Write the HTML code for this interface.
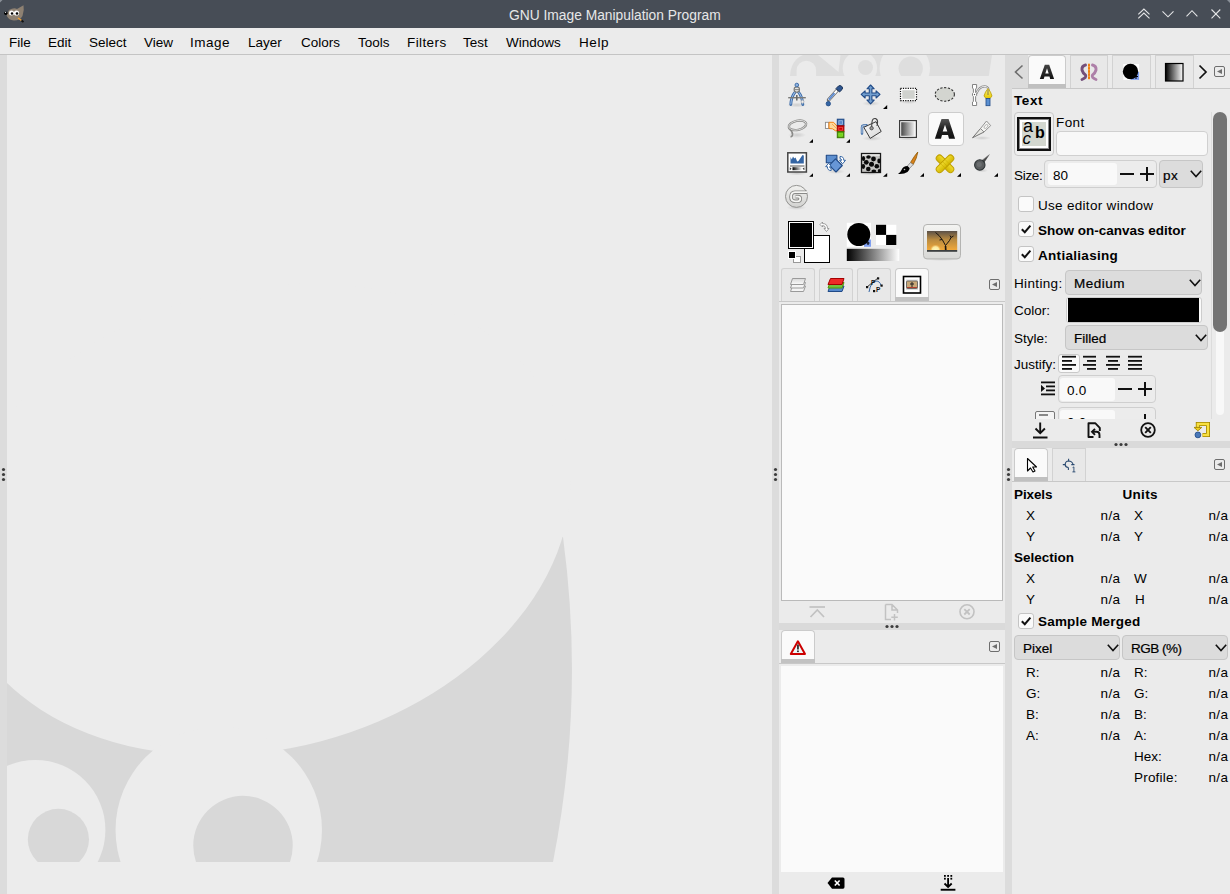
<!DOCTYPE html>
<html><head><meta charset="utf-8">
<style>
*{margin:0;padding:0;box-sizing:border-box}
html,body{width:1230px;height:894px;overflow:hidden;background:#ebebeb;font-family:"Liberation Sans",sans-serif}
.a{position:absolute}
.t{position:absolute;font-size:13.5px;line-height:1;white-space:pre;color:#000}
.b{font-weight:bold}
svg{position:absolute;overflow:visible}
</style></head><body>
<!-- title bar -->
<div class="a" style="left:0;top:0;width:1230px;height:28px;background:#474d56"></div>
<div class="t" style="left:509px;top:9px;font-size:13.8px;color:#e6e7e8">GNU Image Manipulation Program</div>
<!-- title icons -->
<svg style="left:0;top:0" width="1230" height="28" viewBox="0 0 1230 28">
<path d="M1138.3 14.3 L1143.9 9 L1149.5 14.3 M1138.3 18.4 L1143.9 13.1 L1149.5 18.4" fill="none" stroke="#e4e5e6" stroke-width="1.1"/>
<path d="M1162.5 11.3 L1168 16.8 L1173.5 11.3" fill="none" stroke="#e4e5e6" stroke-width="1.1"/>
<path d="M1186.5 16.3 L1192 10.7 L1197.4 16.3" fill="none" stroke="#e4e5e6" stroke-width="1.1"/>
<path d="M1211.5 9.5 L1220.3 18.3 M1220.3 9.5 L1211.5 18.3" fill="none" stroke="#e4e5e6" stroke-width="1.1"/>
<path d="M1227 0 L1230 0 L1230 3 Z" fill="#8a9098"/>
<!-- gimp wilber -->
<path d="M9 10 Q14 7 17 9 L23.5 5.3 Q24.5 10 22.5 16 Q20 20.5 14 20.5 Q8 20 6.5 15 Z" fill="#8e8172"/>
<circle cx="11.5" cy="13" r="2.5" fill="#fff"/><circle cx="16.5" cy="13" r="2.6" fill="#fff"/>
<circle cx="12" cy="13.5" r="1.2" fill="#000"/><circle cx="17" cy="13.5" r="1.3" fill="#000"/>
<circle cx="5.8" cy="13.2" r="1.7" fill="#000"/><circle cx="5.6" cy="12.3" r="0.6" fill="#fff"/>
<path d="M18 18 L21.5 20.5" stroke="#f0a030" stroke-width="1.5"/><path d="M21.5 20.5 L23.5 22" stroke="#111" stroke-width="1.8"/>
<path d="M0 0 L2.5 0 L0 2.5 Z" fill="#8a9098"/>
</svg>
<!-- menubar -->
<div class="a" style="left:0;top:28px;width:1230px;height:26px;background:#ebebeb"></div>
<div class="a" style="left:0;top:54px;width:1230px;height:1px;background:#c4c4c4"></div>
<div class="t" style="left:9px;top:36px">File</div>
<div class="t" style="left:48px;top:36px">Edit</div>
<div class="t" style="left:89px;top:36px">Select</div>
<div class="t" style="left:144px;top:36px">View</div>
<div class="t" style="left:190px;top:36px;letter-spacing:0.5px">Image</div>
<div class="t" style="left:248px;top:36px">Layer</div>
<div class="t" style="left:301px;top:36px">Colors</div>
<div class="t" style="left:358px;top:36px">Tools</div>
<div class="t" style="left:407px;top:36px;letter-spacing:0.4px">Filters</div>
<div class="t" style="left:463px;top:36px">Test</div>
<div class="t" style="left:506px;top:36px">Windows</div>
<div class="t" style="left:579px;top:36px;letter-spacing:0.6px">Help</div>

<!-- left strip -->
<div class="a" style="left:0;top:55px;width:7px;height:839px;background:#dcdcdc"></div>
<!-- canvas -->
<div class="a" style="left:7px;top:55px;width:765px;height:839px;background:#ececec"></div>
<!-- middle strip -->
<div class="a" style="left:772px;top:55px;width:7px;height:839px;background:#dcdcdc"></div>
<!-- toolbox -->
<div class="a" style="left:779px;top:55px;width:226px;height:839px;background:#ebebeb"></div>
<!-- right strip -->
<div class="a" style="left:1005px;top:88px;width:7px;height:806px;background:#dcdcdc"></div>
<!-- right panel -->
<div class="a" style="left:1012px;top:88px;width:218px;height:806px;background:#ebebeb"></div>

<!-- TOOLBOX structure -->
<div class="a" style="left:928px;top:112px;width:36px;height:34px;background:#fafafa;border:1px solid #cdcdcd;border-radius:4px"></div>
<!-- tabs row -->
<div class="a" style="left:781px;top:268px;width:34px;height:34px;background:#e8e8e8;border:1px solid #d2d2d2;border-bottom:none;border-radius:3px 3px 0 0"></div>
<div class="a" style="left:819px;top:268px;width:34px;height:34px;background:#e8e8e8;border:1px solid #d2d2d2;border-bottom:none;border-radius:3px 3px 0 0"></div>
<div class="a" style="left:857px;top:268px;width:34px;height:34px;background:#e8e8e8;border:1px solid #d2d2d2;border-bottom:none;border-radius:3px 3px 0 0"></div>
<div class="a" style="left:895px;top:268px;width:34px;height:33px;background:#fafafa;border:1px solid #cbcbcb;border-bottom:none;border-radius:4px 4px 0 0"></div>
<div class="a" style="left:895px;top:297px;width:34px;height:4px;background:#c2c2c2"></div>
<div class="a" style="left:779px;top:301px;width:226px;height:1px;background:#c8c8c8"></div>
<div class="a" style="left:989px;top:279px;width:11px;height:11px;border:1px solid #6e6e6e;border-radius:2px"></div>
<svg style="left:989px;top:279px" width="11" height="11"><path d="M3 5.5 L8 3 L8 8 Z" fill="#6e6e6e"/></svg>
<!-- list view -->
<div class="a" style="left:781px;top:304px;width:222px;height:297px;background:#fafafa;border:1px solid #bababa"></div>
<!-- paned sep -->
<div class="a" style="left:779px;top:623px;width:226px;height:7px;background:#dadada"></div>
<svg style="left:884px;top:623px" width="16" height="7"><circle cx="3" cy="3.5" r="1.6" fill="#3c3c3c"/><circle cx="8" cy="3.5" r="1.6" fill="#3c3c3c"/><circle cx="13" cy="3.5" r="1.6" fill="#3c3c3c"/></svg>
<!-- error tab bar -->
<div class="a" style="left:781px;top:630px;width:34px;height:33px;background:#fafafa;border:1px solid #cbcbcb;border-bottom:none;border-radius:4px 4px 0 0"></div>
<div class="a" style="left:781px;top:659px;width:34px;height:4px;background:#c2c2c2"></div>
<div class="a" style="left:779px;top:663px;width:226px;height:1px;background:#c8c8c8"></div>
<div class="a" style="left:989px;top:641px;width:11px;height:11px;border:1px solid #6e6e6e;border-radius:2px"></div>
<svg style="left:989px;top:641px" width="11" height="11"><path d="M3 5.5 L8 3 L8 8 Z" fill="#6e6e6e"/></svg>
<div class="a" style="left:781px;top:666px;width:222px;height:206px;background:#fafafa"></div>

<!-- separators dots -->
<svg style="left:0;top:465px" width="7" height="20"><circle cx="3.5" cy="4.5" r="1.6" fill="#3c3c3c"/><circle cx="3.5" cy="9.5" r="1.6" fill="#3c3c3c"/><circle cx="3.5" cy="14.5" r="1.6" fill="#3c3c3c"/></svg>
<svg style="left:772px;top:465px" width="7" height="20"><circle cx="3.5" cy="4.5" r="1.6" fill="#3c3c3c"/><circle cx="3.5" cy="9.5" r="1.6" fill="#3c3c3c"/><circle cx="3.5" cy="14.5" r="1.6" fill="#3c3c3c"/></svg>
<svg style="left:1005px;top:465px" width="7" height="20"><circle cx="3.5" cy="4.5" r="1.6" fill="#3c3c3c"/><circle cx="3.5" cy="9.5" r="1.6" fill="#3c3c3c"/><circle cx="3.5" cy="14.5" r="1.6" fill="#3c3c3c"/></svg>

<!-- RIGHT PANEL structure -->
<div class="a" style="left:1005px;top:55px;width:23px;height:33px;background:#dcdcdc"></div>
<svg style="left:1005px;top:55px" width="23" height="33"><path d="M17.5 10.5 L10.5 17 L17.5 23.5" fill="none" stroke="#6e6e6e" stroke-width="1.6"/></svg>
<div class="a" style="left:1028px;top:55px;width:38px;height:29px;background:#fafafa;border:1px solid #cbcbcb;border-bottom:none;border-radius:4px 4px 0 0"></div>
<div class="a" style="left:1028px;top:84px;width:38px;height:4px;background:#c0c0c0"></div>
<div class="a" style="left:1070px;top:55px;width:38px;height:33px;background:#e8e8e8;border:1px solid #d2d2d2;border-bottom:none"></div>
<div class="a" style="left:1112px;top:55px;width:39px;height:33px;background:#e8e8e8;border:1px solid #d2d2d2;border-bottom:none"></div>
<div class="a" style="left:1155px;top:55px;width:39px;height:33px;background:#e8e8e8;border:1px solid #d2d2d2;border-bottom:none"></div>
<svg style="left:1194px;top:55px" width="18" height="33"><path d="M5.5 10.5 L12 17 L5.5 23.5" fill="none" stroke="#111" stroke-width="1.7"/></svg>
<div class="a" style="left:1012px;top:88px;width:218px;height:1px;background:#c8c8c8"></div>
<div class="a" style="left:1214px;top:66px;width:11px;height:11px;border:1px solid #6e6e6e;border-radius:2px"></div>
<svg style="left:1214px;top:66px" width="11" height="11"><path d="M3 5.5 L8 3 L8 8 Z" fill="#6e6e6e"/></svg>
<!-- scrollbar -->
<div class="a" style="left:1211px;top:112px;width:1px;height:307px;background:#dcdcdc"></div>
<div class="a" style="left:1216px;top:320px;width:8px;height:95px;background:#f8f8f8;border-radius:4px"></div>
<div class="a" style="left:1213px;top:112px;width:14px;height:220px;background:#737373;border-radius:7px"></div>
<!-- paned sep 2 -->
<div class="a" style="left:1012px;top:441px;width:218px;height:7px;background:#dadada"></div>
<svg style="left:1113px;top:441px" width="16" height="7"><circle cx="3" cy="3.5" r="1.6" fill="#3c3c3c"/><circle cx="8" cy="3.5" r="1.6" fill="#3c3c3c"/><circle cx="13" cy="3.5" r="1.6" fill="#3c3c3c"/></svg>
<div class="a" style="left:1014px;top:448px;width:34px;height:30px;background:#fafafa;border:1px solid #cbcbcb;border-bottom:none;border-radius:4px 4px 0 0"></div>
<div class="a" style="left:1014px;top:477px;width:34px;height:4px;background:#c0c0c0"></div>
<div class="a" style="left:1052px;top:448px;width:34px;height:33px;background:#e8e8e8;border:1px solid #d2d2d2;border-bottom:none"></div>
<div class="a" style="left:1012px;top:481px;width:218px;height:1px;background:#c8c8c8"></div>
<div class="a" style="left:1214px;top:459px;width:11px;height:11px;border:1px solid #6e6e6e;border-radius:2px"></div>
<svg style="left:1214px;top:459px" width="11" height="11"><path d="M3 5.5 L8 3 L8 8 Z" fill="#6e6e6e"/></svg>
<!-- RIGHT PANEL content -->
<div class="t b" style="left:1014px;top:94px;letter-spacing:0.6px">Text</div>
<!-- font button -->
<div class="a" style="left:1014px;top:112px;width:40px;height:44px;background:#efefef;border:1px solid #c9c9c9;border-radius:4px"></div>
<div class="a" style="left:1017px;top:117px;width:34px;height:34px;background:#fff;border:2px solid #111;box-shadow:inset 0 0 0 1px #8a8a8a"></div>
<div class="a" style="left:1022px;top:122px;width:24px;height:24px;background:#d3d7cf"></div>
<div class="t" style="left:1023px;top:117px;font-size:18px;color:#000">a</div>
<div class="t" style="left:1022.5px;top:129.8px;font-size:17px;font-style:italic;color:#000">c</div>
<div class="t b" style="left:1035px;top:124.7px;font-size:16px;color:#000">b</div>
<div class="t" style="left:1056px;top:115.5px;letter-spacing:0.4px">Font</div>
<div class="a" style="left:1056px;top:131px;width:152px;height:25px;background:#f8f8f8;border:1px solid #d0d0d0;border-radius:4px"></div>
<!-- size -->
<div class="t" style="left:1014px;top:169px;letter-spacing:-0.3px">Size:</div>
<div class="a" style="left:1044px;top:160px;width:113px;height:28px;background:#ececec;border:1px solid #cfcfcf;border-radius:4px"></div>
<div class="a" style="left:1048px;top:163px;width:69px;height:22px;background:#f9f9f9;border-radius:3px"></div>
<div class="t" style="left:1053px;top:169px">80</div>
<div class="a" style="left:1120px;top:173px;width:14px;height:1.6px;background:#111"></div>
<div class="a" style="left:1140px;top:173px;width:14px;height:1.6px;background:#111"></div>
<div class="a" style="left:1146.2px;top:167px;width:1.6px;height:14px;background:#111"></div>
<div class="a" style="left:1159px;top:160px;width:44px;height:28px;background:#dcdcdc;border:1px solid #c6c6c6;border-radius:4px"></div>
<div class="t" style="left:1163px;top:169px;letter-spacing:0.5px;-webkit-text-stroke:0.2px #000">px</div>
<svg style="left:1190px;top:170px" width="12" height="9"><path d="M0.8 0.8 L6 6.5 L11.2 0.8" fill="none" stroke="#111" stroke-width="1.6"/></svg>
<!-- checkboxes -->
<div class="a" style="left:1018px;top:196px;width:16px;height:16px;background:#fafafa;border:1px solid #c4c4c4;border-radius:3px"></div>
<div class="t" style="left:1038px;top:199px;letter-spacing:0.3px">Use editor window</div>
<div class="a" style="left:1018px;top:221px;width:16px;height:16px;background:#fafafa;border:1px solid #c4c4c4;border-radius:3px"></div>
<svg style="left:1018px;top:221px" width="16" height="16"><path d="M3.8 8.2 L6.8 11.2 L12.4 4.6" fill="none" stroke="#111" stroke-width="2"/></svg>
<div class="t b" style="left:1038px;top:223.7px">Show on-canvas editor</div>
<div class="a" style="left:1018px;top:246px;width:16px;height:16px;background:#fafafa;border:1px solid #c4c4c4;border-radius:3px"></div>
<svg style="left:1018px;top:246px" width="16" height="16"><path d="M3.8 8.2 L6.8 11.2 L12.4 4.6" fill="none" stroke="#111" stroke-width="2"/></svg>
<div class="t b" style="left:1038px;top:248.8px;letter-spacing:0.3px">Antialiasing</div>
<!-- hinting -->
<div class="t" style="left:1014px;top:277px;letter-spacing:0.35px">Hinting:</div>
<div class="a" style="left:1065px;top:270px;width:137px;height:25px;background:#dcdcdc;border:1px solid #c6c6c6;border-radius:4px"></div>
<div class="t" style="left:1074px;top:277px;letter-spacing:0.5px;-webkit-text-stroke:0.2px #000">Medium</div>
<svg style="left:1189px;top:279px" width="12" height="9"><path d="M0.8 0.8 L6 6.5 L11.2 0.8" fill="none" stroke="#111" stroke-width="1.6"/></svg>
<!-- color -->
<div class="t" style="left:1014px;top:303.8px">Color:</div>
<div class="a" style="left:1066px;top:297px;width:136px;height:26px;background:#fafafa;border:1px solid #cdcdcd;border-radius:3px"></div>
<div class="a" style="left:1068px;top:298px;width:131px;height:24px;background:#000"></div>
<!-- style -->
<div class="t" style="left:1014px;top:332px">Style:</div>
<div class="a" style="left:1065px;top:325px;width:143px;height:25px;background:#dcdcdc;border:1px solid #c6c6c6;border-radius:4px"></div>
<div class="t" style="left:1074px;top:332px;-webkit-text-stroke:0.2px #000">Filled</div>
<svg style="left:1195px;top:334px" width="12" height="9"><path d="M0.8 0.8 L6 6.5 L11.2 0.8" fill="none" stroke="#111" stroke-width="1.6"/></svg>
<!-- justify -->
<div class="t" style="left:1014px;top:357.8px">Justify:</div>
<div class="a" style="left:1058px;top:354px;width:22px;height:19px;background:#fafafa;border:1px solid #c9c9c9;border-radius:3px"></div>
<svg style="left:1058px;top:354px" width="90" height="19">
<g fill="#111"><rect x="4" y="1.8" width="14" height="1.8"/><rect x="4" y="6" width="10" height="1.8"/><rect x="4" y="10" width="14" height="1.8"/><rect x="4" y="14" width="10" height="1.8"/>
<rect x="25" y="1.8" width="13" height="1.8"/><rect x="29" y="6" width="9" height="1.8"/><rect x="25" y="10" width="13" height="1.8"/><rect x="29" y="14" width="9" height="1.8"/>
<rect x="48" y="1.8" width="14" height="1.8"/><rect x="50" y="6" width="10" height="1.8"/><rect x="48" y="10" width="14" height="1.8"/><rect x="50" y="14" width="10" height="1.8"/>
<rect x="70" y="1.8" width="14" height="1.8"/><rect x="70" y="6" width="14" height="1.8"/><rect x="70" y="10" width="14" height="1.8"/><rect x="70" y="14" width="14" height="1.8"/></g></svg>
<!-- indent -->
<svg style="left:1040px;top:381px" width="16" height="16"><g fill="#111"><rect x="1" y="0.5" width="14" height="1.8"/><rect x="6" y="4.5" width="9" height="1.8"/><rect x="6" y="8.5" width="9" height="1.8"/><rect x="1" y="12.5" width="14" height="1.8"/><path d="M1 3.8 L5 7.4 L1 11 Z"/></g></svg>
<div class="a" style="left:1058px;top:375px;width:98px;height:28px;background:#ececec;border:1px solid #cfcfcf;border-radius:4px"></div>
<div class="a" style="left:1060px;top:378px;width:55px;height:23px;background:#f9f9f9;border-radius:3px"></div>
<div class="t" style="left:1067px;top:384px;letter-spacing:0.3px">0.0</div>
<div class="a" style="left:1118px;top:388.2px;width:14px;height:1.6px;background:#111"></div>
<div class="a" style="left:1138px;top:388.2px;width:14px;height:1.6px;background:#111"></div>
<div class="a" style="left:1144.2px;top:382px;width:1.6px;height:14px;background:#111"></div>
<!-- clipped row -->
<div class="a" style="left:1012px;top:403px;width:199px;height:16px;overflow:hidden">
<div class="a" style="left:46px;top:3.5px;width:98px;height:28px;background:#ececec;border:1px solid #cfcfcf;border-radius:4px"></div>
<div class="a" style="left:48px;top:6.5px;width:55px;height:23px;background:#f9f9f9;border-radius:3px"></div>
<div class="t" style="left:55px;top:12.5px;letter-spacing:0.3px">0.0</div>
<div class="a" style="left:132.2px;top:10.5px;width:1.6px;height:14px;background:#111"></div>
<div class="a" style="left:23px;top:7.5px;width:20px;height:18px;background:#f4f4f4;border:1px solid #777;border-radius:2px"></div>
<div class="a" style="left:27px;top:10.5px;width:9px;height:2px;background:#888"></div>
</div>
<!-- bottom buttons -->
<svg style="left:1030px;top:420px" width="180" height="20">
<g fill="none" stroke="#111" stroke-width="1.9">
<path d="M10.2 2.5 L10.2 13"/><path d="M5.5 8.5 L10.2 13.2 L14.9 8.5"/><path d="M3 17.5 L17.5 17.5" stroke-width="2"/>
<path d="M63.5 17 L58.5 17 L58.5 3.2 L65.2 3.2 L69.8 7.8 L69.8 11" stroke-width="1.9" stroke-linejoin="round"/>
<path d="M65 8.8 L62 11.8 L65 14.8" stroke-width="1.9"/><path d="M62.5 11.8 L66.5 11.8 Q69.5 11.8 69.5 15 L69.5 18" stroke-width="1.9"/>
<circle cx="118" cy="10" r="6.8" stroke-width="1.8"/><path d="M115.2 7.2 L120.8 12.8 M120.8 7.2 L115.2 12.8" stroke-width="1.9"/>
</g>
<path d="M172.5 15 L178 15 L178 4 L167.8 4 L167.8 8.5" fill="none" stroke="#a08400" stroke-width="4"/>
<path d="M172.5 15 L178 15 L178 4 L167.8 4 L167.8 8.5" fill="none" stroke="#f8e040" stroke-width="2.4"/>
<path d="M164 7.4 L171.8 7.4 L167.9 10.8 Z" fill="#f0d020" stroke="#a08400" stroke-width="0.9" stroke-linejoin="round"/>
<circle cx="167.9" cy="14.9" r="2.9" fill="#4a78b8" stroke="#204a87" stroke-width="0.8"/>
</svg>

<!-- pointer panel -->
<div class="t b" style="left:1014px;top:487.7px;letter-spacing:-0.1px">Pixels</div>
<div class="t b" style="left:1122.5px;top:487.7px;letter-spacing:0.3px">Units</div>
<div class="t" style="left:1026px;top:508.8px">X</div><div class="t" style="left:1100.5px;top:508.8px;letter-spacing:0.4px">n/a</div><div class="t" style="left:1134px;top:508.8px">X</div><div class="t" style="left:1208.4px;top:508.8px;letter-spacing:0.4px">n/a</div>
<div class="t" style="left:1026px;top:529.5px">Y</div><div class="t" style="left:1100.5px;top:529.5px;letter-spacing:0.4px">n/a</div><div class="t" style="left:1134px;top:529.5px">Y</div><div class="t" style="left:1208.4px;top:529.5px;letter-spacing:0.4px">n/a</div>
<div class="t b" style="left:1014px;top:551px">Selection</div>
<div class="t" style="left:1026px;top:571.8px">X</div><div class="t" style="left:1100.5px;top:571.8px;letter-spacing:0.4px">n/a</div><div class="t" style="left:1134px;top:571.8px">W</div><div class="t" style="left:1208.4px;top:571.8px;letter-spacing:0.4px">n/a</div>
<div class="t" style="left:1026px;top:592.8px">Y</div><div class="t" style="left:1100.5px;top:592.8px;letter-spacing:0.4px">n/a</div><div class="t" style="left:1135px;top:592.8px">H</div><div class="t" style="left:1208.4px;top:592.8px;letter-spacing:0.4px">n/a</div>
<div class="a" style="left:1018px;top:613px;width:16px;height:16px;background:#fafafa;border:1px solid #c4c4c4;border-radius:3px"></div>
<svg style="left:1018px;top:613px" width="16" height="16"><path d="M3.8 8.2 L6.8 11.2 L12.4 4.6" fill="none" stroke="#111" stroke-width="2"/></svg>
<div class="t b" style="left:1038px;top:615.3px;letter-spacing:0.2px">Sample Merged</div>
<div class="a" style="left:1014px;top:635px;width:106px;height:25px;background:#dcdcdc;border:1px solid #c6c6c6;border-radius:4px"></div>
<div class="t" style="left:1023px;top:642px;-webkit-text-stroke:0.2px #000">Pixel</div>
<svg style="left:1107px;top:643.5px" width="12" height="9"><path d="M0.8 0.8 L6 6.5 L11.2 0.8" fill="none" stroke="#111" stroke-width="1.6"/></svg>
<div class="a" style="left:1122px;top:635px;width:106px;height:25px;background:#dcdcdc;border:1px solid #c6c6c6;border-radius:4px"></div>
<div class="t" style="left:1131px;top:642px;letter-spacing:-0.5px;-webkit-text-stroke:0.2px #000">RGB (%)</div>
<svg style="left:1215px;top:643.5px" width="12" height="9"><path d="M0.8 0.8 L6 6.5 L11.2 0.8" fill="none" stroke="#111" stroke-width="1.6"/></svg>
<div class="t" style="left:1026px;top:665.6px">R:</div><div class="t" style="left:1100.5px;top:665.6px;letter-spacing:0.4px">n/a</div><div class="t" style="left:1134px;top:665.6px">R:</div><div class="t" style="left:1208.4px;top:665.6px;letter-spacing:0.4px">n/a</div>
<div class="t" style="left:1026px;top:686.7px">G:</div><div class="t" style="left:1100.5px;top:686.7px;letter-spacing:0.4px">n/a</div><div class="t" style="left:1134px;top:686.7px">G:</div><div class="t" style="left:1208.4px;top:686.7px;letter-spacing:0.4px">n/a</div>
<div class="t" style="left:1026px;top:707.7px">B:</div><div class="t" style="left:1100.5px;top:707.7px;letter-spacing:0.4px">n/a</div><div class="t" style="left:1134px;top:707.7px">B:</div><div class="t" style="left:1208.4px;top:707.7px;letter-spacing:0.4px">n/a</div>
<div class="t" style="left:1026px;top:728.7px">A:</div><div class="t" style="left:1100.5px;top:728.7px;letter-spacing:0.4px">n/a</div><div class="t" style="left:1134px;top:728.7px">A:</div><div class="t" style="left:1208.4px;top:728.7px;letter-spacing:0.4px">n/a</div>
<div class="t" style="left:1134px;top:749.8px">Hex:</div><div class="t" style="left:1208.4px;top:749.8px;letter-spacing:0.4px">n/a</div>
<div class="t" style="left:1134px;top:770.8px;letter-spacing:0.2px">Profile:</div><div class="t" style="left:1208.4px;top:770.8px;letter-spacing:0.4px">n/a</div>
<!-- FG/BG divs -->
<div class="a" style="left:804px;top:235px;width:26px;height:28px;background:#fff;border:1px solid #000"></div>
<div class="a" style="left:788px;top:221px;width:26px;height:28px;background:#000;border:1px solid #000;box-shadow:inset 0 0 0 1px #fff"></div>
<div class="a" style="left:788px;top:221px;width:26px;height:28px;border:2px solid #000;outline:none"></div>
<div class="a" style="left:789px;top:222px;width:24px;height:26px;border:1px solid #fff"></div>
<div class="a" style="left:793px;top:256px;width:8px;height:7px;background:#fff;border:1px solid #999"></div>
<div class="a" style="left:788px;top:251px;width:8px;height:8px;background:#000;border:1px solid #fff"></div>
<!-- TOOL ICONS -->
<svg style="left:0;top:0" width="1230" height="894" viewBox="0 0 1230 894">
<defs>
<linearGradient id="gA" x1="0" y1="0" x2="0" y2="1"><stop offset="0" stop-color="#555"/><stop offset="0.5" stop-color="#222"/><stop offset="1" stop-color="#111"/></linearGradient>
<linearGradient id="gG" x1="0" y1="0" x2="1" y2="0"><stop offset="0" stop-color="#4a4a4a"/><stop offset="1" stop-color="#f2f2f2"/></linearGradient>
<linearGradient id="gBW" x1="0" y1="0" x2="1" y2="0"><stop offset="0" stop-color="#000"/><stop offset="1" stop-color="#fff"/></linearGradient>
<radialGradient id="shd" cx="0.5" cy="0.5" r="0.5"><stop offset="0" stop-color="#000" stop-opacity="0.13"/><stop offset="1" stop-color="#000" stop-opacity="0"/></radialGradient>
<linearGradient id="gY" x1="0" y1="0" x2="0" y2="1"><stop offset="0" stop-color="#fff27a"/><stop offset="1" stop-color="#e5c900"/></linearGradient>
<linearGradient id="gSun" x1="0" y1="0" x2="0" y2="1"><stop offset="0" stop-color="#5a5048"/><stop offset="0.45" stop-color="#b88a40"/><stop offset="1" stop-color="#f0a83a"/></linearGradient>
</defs>
<!-- shadows -->
<g fill="url(#shd)">
<ellipse cx="797" cy="105" rx="10" ry="2.5"/><ellipse cx="871" cy="103.5" rx="9" ry="2.5"/><ellipse cx="908.5" cy="102" rx="9" ry="2"/>
<ellipse cx="797" cy="135" rx="9" ry="3"/><ellipse cx="872" cy="138.5" rx="10" ry="2.5"/><ellipse cx="908" cy="138.5" rx="10" ry="2"/><ellipse cx="982" cy="138" rx="9" ry="2"/>
<ellipse cx="797" cy="173.5" rx="10" ry="2"/><ellipse cx="836" cy="171.5" rx="9" ry="2.5"/><ellipse cx="870" cy="173.5" rx="10" ry="2"/><ellipse cx="982" cy="170.5" rx="6" ry="2"/><ellipse cx="796.5" cy="207.5" rx="10" ry="2.5"/>
</g>
<!-- 1 compass -->
<g>
<path d="M795.3 91.8 Q791.2 96.5 790.8 104.5" fill="none" stroke="#3465a4" stroke-width="2.8" stroke-linecap="round"/>
<path d="M795.3 91.8 Q791.2 96.5 790.8 104.5" fill="none" stroke="#9cbde6" stroke-width="1.1"/>
<path d="M798.3 91.8 Q802.4 96.5 802.8 104.5" fill="none" stroke="#3465a4" stroke-width="2.8" stroke-linecap="round"/>
<path d="M798.3 91.8 Q802.4 96.5 802.8 104.5" fill="none" stroke="#9cbde6" stroke-width="1.1"/>
<rect x="788.2" y="97" width="17.6" height="1.4" fill="#7a7a78"/><rect x="796" y="95" width="1.6" height="5.5" fill="#6a6a68"/>
<circle cx="796.8" cy="89.6" r="2.7" fill="#e4e4e2" stroke="#7a7a78" stroke-width="1.1"/><path d="M794.4 89.6 L799.2 89.6" stroke="#7a7a78" stroke-width="0.9"/>
<circle cx="796.8" cy="85" r="1.8" fill="#8fb3e0" stroke="#3465a4" stroke-width="0.9"/>
<circle cx="802.5" cy="101.7" r="1.5" fill="#eee" stroke="#aaa" stroke-width="0.6"/>
</g>
<!-- 2 dropper -->
<g>
<path d="M837 90.5 L828.5 100" stroke="#666" stroke-width="3.4" stroke-linecap="round"/>
<path d="M837 90.5 L828.5 100" stroke="#fff" stroke-width="2"/>
<path d="M834.5 93.2 L828.8 99.6" stroke="#5c8ad0" stroke-width="2"/>
<path d="M836 88.5 L838.5 86 Q840 84.8 841.8 86.4 Q843.4 88 842 89.6 L839.5 92 Z" fill="#2d5590" stroke="#1d355a" stroke-width="1"/>
<circle cx="828.3" cy="103.7" r="2.2" fill="#3465a4" stroke="#204a87" stroke-width="0.8"/>
</g>
<!-- 3 move -->
<g fill="#729fcf" stroke="#204a87" stroke-width="1.1" stroke-linejoin="round">
<path d="M870.6 85 L874.2 88.8 L871.9 88.8 L871.9 93 L876.1 93 L876.1 90.8 L880 94.4 L876.1 98 L876.1 95.8 L871.9 95.8 L871.9 100 L874.2 100 L870.6 103.8 L867 100 L869.3 100 L869.3 95.8 L865.1 95.8 L865.1 98 L861.2 94.4 L865.1 90.8 L865.1 93 L869.3 93 L869.3 88.8 L867 88.8 Z"/>
</g>
<path d="M883 109 L887.2 105 L887.2 109 Z" fill="#000"/>
<!-- 4 rect select -->
<rect x="900.5" y="88.3" width="16" height="12.3" fill="#fff" stroke="#111" stroke-width="1.2" stroke-dasharray="1.2 1.2"/>
<rect x="902.3" y="90.2" width="12.4" height="8.6" fill="#d0d2ce"/>
<!-- 5 ellipse select -->
<ellipse cx="944.8" cy="94.4" rx="9.6" ry="6.8" fill="#d3d5d0" stroke="#333" stroke-width="1.1" stroke-dasharray="2.2 1.6"/>
<!-- 6 paths -->
<g>
<path d="M976 94 Q980 85 986 86.5 Q989 87.5 988.5 92" fill="none" stroke="#888" stroke-width="2.2"/>
<path d="M976 94 Q980 85 986 86.5 Q989 87.5 988.5 92" fill="none" stroke="#f4f4f4" stroke-width="0.9"/>
<path d="M972.5 84.5 L976.6 84.5 L976.6 88 L975.6 89 L975.6 92.5 L976.6 93.5 L976.6 95.5 L975.6 96.5 L975.6 101.5 L976.6 102 L976.6 105.5 L972.5 105.5 L972.5 102 L973.4 101.5 L973.4 96.5 L972.5 95.5 L972.5 93.5 L973.4 92.5 L973.4 89 L972.5 88 Z" fill="#fff" stroke="#777" stroke-width="0.9"/>
<circle cx="974.5" cy="94.5" r="0.7" fill="#555"/>
<path d="M988 88.5 Q985 92 984 96 L986 98.5 L990 98.5 L992 96 Q991 92 988 88.5 Z" fill="url(#gY)" stroke="#b89a00" stroke-width="0.8"/>
<path d="M988 90 L988 95" stroke="#555" stroke-width="0.7"/>
<rect x="986" y="98.5" width="4" height="7.2" fill="#5a8fd0" stroke="#204a87" stroke-width="0.8"/>
</g>
<!-- 7 lasso -->
<g fill="none" stroke="#8a8a88">
<ellipse cx="797.5" cy="125.3" rx="8.8" ry="4.6" transform="rotate(-12 797.5 125.3)" stroke-width="2.4"/>
<ellipse cx="797.5" cy="125.3" rx="8.8" ry="4.6" transform="rotate(-12 797.5 125.3)" stroke="#e8e8e8" stroke-width="0.8"/>
<path d="M790 129.5 Q793 132 792.5 135 Q792 137 790.5 136.5" stroke-width="1.6"/>
</g>
<path d="M809.2 142.7 L813 139 L813 142.7 Z" fill="#000"/>
<!-- 8 align -->
<g>
<rect x="825.4" y="122.3" width="3.4" height="6.2" fill="#fff" stroke="#888" stroke-width="0.9"/>
<path d="M829 122.3 L833.5 122.3 L839 128 L838 130.5 L835.5 130.8 L832.5 128.8 L829 128.5 Z" fill="#fdd99b" stroke="#f57900" stroke-width="0.9" stroke-linejoin="round"/>
<path d="M832 124 L836.5 128.5" stroke="#f8a040" stroke-width="0.8"/>
<rect x="837.3" y="119.2" width="6.6" height="6.6" fill="#3465a4" stroke="#204a87" stroke-width="1"/>
<rect x="838.8" y="120.7" width="3.6" height="3.6" fill="#5a88c8" stroke="#9fbfe8" stroke-width="0.8"/>
<rect x="837.3" y="125.8" width="6.6" height="5.9" fill="#cc0000" stroke="#a40000" stroke-width="1"/>
<rect x="838.8" y="127.3" width="3.6" height="2.9" fill="#cc0000" stroke="#ef5050" stroke-width="0.8"/>
<rect x="837.3" y="131.7" width="6.6" height="6" fill="#4e9a06" stroke="#3a7a04" stroke-width="1"/>
<rect x="838.8" y="133.2" width="3.6" height="3" fill="#73d216" stroke="#8ae234" stroke-width="0.8"/>
</g>
<path d="M846.2 142.7 L850 139 L850 142.7 Z" fill="#000"/>
<!-- 9 bucket -->
<defs><linearGradient id="gBk" x1="0" y1="0" x2="1" y2="1"><stop offset="0" stop-color="#fafafa"/><stop offset="1" stop-color="#d6d6d6"/></linearGradient></defs>
<g>
<path d="M862 133.5 L862 127 Q862 125.6 863.6 125.4 L866.5 125.2" fill="none" stroke="#3465a4" stroke-width="2.4" stroke-linecap="round"/>
<path d="M862 133.5 L862 127 Q862 125.6 863.6 125.4 L866.5 125.2" fill="none" stroke="#dce6f4" stroke-width="0.9"/>
<path d="M863.8 127.3 L876 121.7 L881.2 131.5 L870.2 138.4 Z" fill="url(#gBk)" stroke="#3a3a3a" stroke-width="1" stroke-linejoin="round"/>
<path d="M871.5 128 L872 122 Q872.5 118 875.5 118.5 Q878 119.5 877.5 123 L877 126" fill="none" stroke="#444" stroke-width="1.1"/>
<circle cx="871.6" cy="128.2" r="1.7" fill="#999" stroke="#444" stroke-width="0.8"/>
</g>
<!-- 10 gradient -->
<rect x="899.6" y="120.6" width="16.8" height="16.8" fill="#fff" stroke="#3a3a3a" stroke-width="1.2"/>
<rect x="901.2" y="122.2" width="13.6" height="13.6" fill="url(#gG)"/>
<!-- 11 text A -->
<path d="M934.9 138.7 L941.5 118.9 L948.6 118.9 L955.1 138.7 L949 138.7 L948 135 L942 135 L941 138.7 Z M942.7 131.6 L947.3 131.6 L945 124.8 Z" fill="url(#gA)" fill-rule="evenodd"/>
<!-- 12 ink -->
<g>
<path d="M972.5 137.8 L980.5 128.5 L984 132 Z" fill="#e8e8e4" stroke="#666" stroke-width="0.9"/>
<path d="M980.5 128.5 L986.5 121 L990.7 125.6 L984 132 Z" fill="#f4f4f2" stroke="#888" stroke-width="0.9"/>
<ellipse cx="986" cy="126.5" rx="1.4" ry="2.4" transform="rotate(45 986 126.5)" fill="none" stroke="#aaa" stroke-width="0.8"/>
</g>
<!-- 13 levels -->
<g>
<rect x="787.8" y="152.8" width="18.6" height="19.2" fill="#fff" stroke="#444" stroke-width="1.5"/>
<path d="M790.5 163.5 L790.5 157 L791.8 159.5 L793 156.5 L794.3 158.5 L795.5 157.5 L797.2 161.5 L798.5 161 L800.5 158 L802.5 155 L803.8 155.5 L803.8 163.5 Z" fill="#3465a4"/>
<rect x="790" y="165.5" width="14.5" height="1" fill="#555"/>
<rect x="792.5" y="167.2" width="9.5" height="3" fill="url(#gBW)"/>
<path d="M789.8 167.2 L791.6 168.7 L789.8 170.2 Z M804.4 167.2 L802.6 168.7 L804.4 170.2 Z" fill="#333"/>
</g>
<path d="M809.2 176.8 L813 173.2 L813 176.8 Z" fill="#000"/>
<!-- 14 transform -->
<g stroke="#204a87" stroke-width="1.1" stroke-linejoin="round">
<rect x="826.3" y="155.2" width="10.6" height="7.6" fill="#5d8fcf"/>
<path d="M835.5 158.8 L842.3 165.5 L836 172 L829.2 165.3 Z" fill="#6796d6"/>
</g>
<g fill="#fff" stroke="#3465a4" stroke-width="1" stroke-linejoin="round">
<path d="M840 156.5 Q843.8 156.3 843.8 160.3 L845.5 160.3 L842.6 163.8 L839.6 160.3 L841.5 160.3 Q841.5 158.6 840 158.6 Z"/>
<path d="M831.2 170.5 Q827.4 170.7 827.4 166.7 L825.7 166.7 L828.6 163.2 L831.6 166.7 L829.7 166.7 Q829.7 168.4 831.2 168.4 Z"/>
</g>
<path d="M846.2 176.8 L850 173.2 L850 176.8 Z" fill="#000"/>
<!-- 15 warp -->
<g>
<rect x="861.5" y="153.5" width="19" height="19" fill="#c4c4c2" stroke="#1a1a1a" stroke-width="1.3"/>
<rect x="862.3" y="154.3" width="17.4" height="1.6" fill="#e8e8e6"/>
<g fill="#0a0a0a">
<ellipse cx="863.5" cy="158.5" rx="1.6" ry="2.6"/><ellipse cx="868.5" cy="157" rx="2.3" ry="1.8"/><circle cx="873.5" cy="159" r="2.4"/><ellipse cx="879" cy="161" rx="1.7" ry="2.4"/>
<circle cx="866.3" cy="162.3" r="2.4"/><circle cx="871.5" cy="164.3" r="2.5"/><circle cx="876.8" cy="166.3" r="2.3"/>
<ellipse cx="863.3" cy="166.5" rx="1.8" ry="2.4"/><circle cx="868.3" cy="169" r="2.3"/><ellipse cx="873.8" cy="171" rx="2.4" ry="1.6"/><ellipse cx="879.2" cy="170.8" rx="1.4" ry="1.8"/></g>
</g>
<path d="M883 176.8 L887.2 173 L887.2 176.8 Z" fill="#000"/>
<!-- 16 brush -->
<g>
<path d="M917.8 152 Q915 155 910.5 162.5 L913.2 164.5 Q917 158 917.8 152 Z" fill="#d8801a" stroke="#8f5902" stroke-width="0.8"/>
<path d="M910.5 162.5 L907 166.5 L909.5 168.5 L913.2 164.5 Z" fill="#ddd" stroke="#777" stroke-width="0.7"/>
<path d="M907.5 166 Q903 166 901.5 170 Q900.5 172.5 898 174 Q904 174.5 907.5 172 Q910 169.5 909.5 168 Z" fill="#000"/>
<circle cx="904.5" cy="169.5" r="0.8" fill="#bbb"/>
</g>
<path d="M920 176.8 L924 173 L924 176.8 Z" fill="#000"/>
<!-- 17 heal -->
<defs><linearGradient id="gH" x1="0" y1="0" x2="0" y2="1"><stop offset="0" stop-color="#f0dc30"/><stop offset="1" stop-color="#d4b800"/></linearGradient></defs>
<g fill="url(#gH)" stroke="#c0a000" stroke-width="1">
<rect x="934" y="160.5" width="22" height="6.6" rx="3.3" transform="rotate(45 945 163.8)"/>
<rect x="934" y="160.5" width="22" height="6.6" rx="3.3" transform="rotate(-45 945 163.8)"/>
</g>
<g stroke="#c8a800" stroke-width="0.6" opacity="0.8"><path d="M942.5 161.5 L947.5 166.5 M945 159.5 L949.5 164 M940.5 163.5 L945 168"/></g>
<path d="M957 176.8 L961 173 L961 176.8 Z" fill="#000"/>
<!-- 18 smudge -->
<g>
<path d="M980 162 L990 154 L983 164.5 Z" fill="#4a4a4a"/>
<path d="M981 161 L989 155" stroke="#888" stroke-width="0.6"/>
<circle cx="979.8" cy="165" r="5.2" fill="#5a5d5f" stroke="#2e3436" stroke-width="1.1"/>
<circle cx="979.3" cy="164.5" r="2.5" fill="#6c6f71"/>
</g>
<path d="M994 176.8 L998 173 L998 176.8 Z" fill="#000"/>
<!-- 19 gegl -->
<defs><linearGradient id="gGe" x1="0" y1="0" x2="0" y2="1"><stop offset="0" stop-color="#f2f2f0"/><stop offset="1" stop-color="#d2d2d0"/></linearGradient></defs>
<g>
<circle cx="796.5" cy="196.4" r="11" fill="url(#gGe)" stroke="#8a8a88" stroke-width="0.9"/>
<path d="M807 192.2 L795 192.2 Q791 192.5 791 197 Q791 201.3 795.5 201.3 L797.5 201.3 Q800.3 201.3 800.3 198.8 Q800.3 196.6 797.8 196.6 L795.5 196.6" fill="none" stroke="#8a8a88" stroke-width="3.6"/>
<path d="M807 192.2 L795 192.2 Q791 192.5 791 197 Q791 201.3 795.5 201.3 L797.5 201.3 Q800.3 201.3 800.3 198.8 Q800.3 196.6 797.8 196.6 L795.5 196.6" fill="none" stroke="#f6f6f4" stroke-width="1.8"/>
</g>
<!-- FG/BG -->
<path d="M820 224.5 L822.5 222 L822.5 223.5 Q827.5 223.5 827.5 228.5 L829 228.5 L826.5 231.5 L824 228.5 L825.5 228.5 Q825.5 225.5 822.5 225.5 L822.5 227 Z" fill="#fff" stroke="#888" stroke-width="0.8"/>
<!-- brush / pattern / gradient -->
<rect x="846.8" y="222.8" width="24.2" height="24" fill="#fff"/>
<rect x="864" y="239.5" width="7" height="7.3" fill="#7f9ff0"/>
<circle cx="858.8" cy="234.5" r="11.5" fill="#000"/>
<path d="M866.5 243 L869.5 243 M868 241.5 L868 245" stroke="#000" stroke-width="1.1"/>
<rect x="876" y="224.8" width="20.3" height="20.2" fill="#fff"/>
<rect x="876" y="224.8" width="10.1" height="10.1" fill="#000"/><rect x="886.1" y="234.9" width="10.2" height="10.1" fill="#000"/>
<rect x="846.8" y="248.8" width="52.4" height="12.2" fill="url(#gBW)"/>
<!-- image thumb -->
<defs><linearGradient id="gBtn" x1="0" y1="0" x2="0" y2="1"><stop offset="0" stop-color="#f4f4f2"/><stop offset="1" stop-color="#d8d8d6"/></linearGradient>
<radialGradient id="gSunR" cx="0.5" cy="0.5" r="0.5"><stop offset="0" stop-color="#fff8c0"/><stop offset="0.6" stop-color="#fbeaa0"/><stop offset="1" stop-color="#f8c060" stop-opacity="0"/></radialGradient>
<clipPath id="thc"><rect x="927" y="231" width="30.2" height="19"/></clipPath></defs>
<ellipse cx="942" cy="259" rx="18" ry="2" fill="url(#shd)"/>
<rect x="923.5" y="224.5" width="37" height="34.4" rx="3.5" fill="url(#gBtn)" stroke="#b4b4b2" stroke-width="1"/>
<rect x="927" y="231" width="30.2" height="19" fill="url(#gSun)"/>
<g clip-path="url(#thc)"><circle cx="935.5" cy="250" r="5.5" fill="url(#gSunR)"/></g>
<rect x="927" y="250" width="30.2" height="1.8" fill="#3c3f40"/>
<path d="M945.7 250 L945.5 245.5 L942.5 240 L939 235.5 L935.5 232.5 M945.5 245.5 L949.5 240.5 L951 237.5 L950 235.5 M951 237.5 L953.5 236 M942 239.5 L939.5 240" fill="none" stroke="#1a1410" stroke-width="1"/>
<path d="M945.7 250 L945.5 246" stroke="#1a1410" stroke-width="1.6"/>
</svg>
<!-- TAB ICONS -->
<svg style="left:0;top:0" width="1230" height="894" viewBox="0 0 1230 894">
<defs>
<linearGradient id="gL" x1="0" y1="0" x2="0" y2="1"><stop offset="0" stop-color="#d8d8d8"/><stop offset="1" stop-color="#fafafa"/></linearGradient>
<linearGradient id="gBW2" x1="0" y1="0" x2="1" y2="0"><stop offset="0" stop-color="#000"/><stop offset="1" stop-color="#fff"/></linearGradient>
<linearGradient id="gA2" x1="0" y1="0" x2="0" y2="1"><stop offset="0" stop-color="#444"/><stop offset="1" stop-color="#111"/></linearGradient>
</defs>
<!-- layers -->
<g stroke="#9a9a9a" stroke-width="1" stroke-linejoin="round">
<path d="M790.5 291.5 L792.5 286 L805.5 286 L803.5 291.5 Z" fill="#f4f4f4"/>
<path d="M790.5 288 L792.5 282.5 L805.5 282.5 L803.5 288 Z" fill="#f4f4f4"/>
<path d="M790.5 284.5 L792.5 278.5 L805.5 278.5 L803.5 284.5 Z" fill="url(#gL)"/>
</g>
<!-- channels -->
<g stroke-width="1" stroke-linejoin="round">
<path d="M828 291.5 L830 286 L844 286 L842 291.5 Z" fill="#5588cc" stroke="#204a87"/>
<path d="M828 288 L830 282.5 L844 282.5 L842 288 Z" fill="#73c040" stroke="#4e9a06"/>
<path d="M828 284.5 L830.5 278.5 L844 278.5 L842 284.5 Z" fill="#ef2929" stroke="#a40000"/>
</g>
<!-- paths -->
<g>
<path d="M867 287 L878 278" stroke="#222" stroke-width="0.9"/>
<path d="M869 292 Q871 281 876 281 Q880 281 881 285.5" fill="none" stroke="#3465a4" stroke-width="1"/>
<rect x="866" y="286" width="2.2" height="2.2" fill="#111"/><rect x="877" y="277.3" width="2.2" height="2.2" fill="#111"/><rect x="880.5" y="284.5" width="2.2" height="2.2" fill="#111"/><rect x="873" y="290" width="2.2" height="2.2" fill="#111"/>
<text x="871" y="285" font-family="Liberation Sans" font-size="6.5" font-weight="bold" fill="#111">P</text>
<text x="876" y="292" font-family="Liberation Sans" font-size="6.5" font-weight="bold" fill="#111">P</text>
</g>
<!-- images -->
<rect x="903.5" y="276.5" width="17" height="16.5" fill="#fff" stroke="#000" stroke-width="1.6"/>
<rect x="906" y="279.5" width="12" height="10.5" fill="#ddd"/>
<rect x="906.5" y="281" width="11" height="7.5" rx="1" fill="#c8a878" stroke="#555" stroke-width="0.8"/>
<path d="M912 282 L912 287 M910 284 L914 284" stroke="#222" stroke-width="1"/>
<rect x="907" y="287" width="10" height="1" fill="#b04030"/>
<!-- warning -->
<path d="M797.9 641.3 L805 654 L790.8 654 Z" fill="#eef8f8" stroke="#cc0000" stroke-width="2" stroke-linejoin="round"/>
<rect x="797.1" y="644.5" width="1.7" height="5" fill="#222"/><rect x="797.1" y="650.5" width="1.7" height="1.6" fill="#222"/>
<!-- layer buttons disabled -->
<g fill="none" stroke="#c2c2c2" stroke-width="1.7">
<path d="M809.5 607 L825 607"/><path d="M810.5 617 L817.3 610 L824 617"/>
<path d="M885.5 604.5 L892 604.5 L897.5 610 L897.5 613 M885.5 604.5 L885.5 619.5 L891 619.5 M894.5 614 L894.5 620.5 M891.3 617.3 L897.8 617.3 M892 604.5 L892 610 L897.5 610" stroke-width="1.5"/>
<circle cx="967" cy="611.8" r="7" stroke-width="1.6"/><path d="M964.3 609.1 L969.7 614.5 M969.7 609.1 L964.3 614.5" stroke-width="1.8"/>
</g>
<!-- error bottom buttons -->
<path d="M832 877.5 L843 877.5 Q844.5 877.5 844.5 879 L844.5 887 Q844.5 888.7 843 888.7 L832 888.7 L827.5 883.1 Z" fill="#000"/>
<path d="M834.8 880.5 L839.6 885.5 M839.6 880.5 L834.8 885.5" stroke="#fff" stroke-width="1.6"/>
<g fill="#000"><rect x="944" y="875" width="1.8" height="1.8"/><rect x="947.2" y="875" width="1.8" height="1.8"/><rect x="950.4" y="875" width="1.8" height="1.8"/>
<rect x="944" y="877.8" width="1.8" height="1.8"/><rect x="950.4" y="877.8" width="1.8" height="1.8"/></g>
<path d="M948.1 878 L948.1 886.5 M944.5 883.5 L948.1 887 L951.7 883.5" fill="none" stroke="#000" stroke-width="1.8"/>
<rect x="940.7" y="888.8" width="14.7" height="1.9" fill="#000"/>
<!-- pointer tab icons -->
<path d="M1027.5 458.5 L1027.5 471 L1030.5 468 L1033 472 L1035 471 L1032.7 467 L1036.5 467 Z" fill="#fff" stroke="#000" stroke-width="1.1" stroke-linejoin="round"/>
<g fill="none" stroke="#2a4a70" stroke-width="1.1">
<path d="M1073.2 464.6 Q1072 461 1068.6 461 Q1065.2 461.2 1065.2 464.6 Q1065.4 467.3 1068.4 467.5"/>
<path d="M1068.6 458.8 L1068.6 461 M1062.8 464.6 L1065.2 464.6 M1071.3 464.6 L1074.5 464.6 M1068.4 467.5 L1068.4 470"/>
<path d="M1072.6 467.6 L1073.9 466.9 L1073.9 472 M1072.4 471.9 L1075.4 471.9" stroke-width="0.9"/>
</g>
<!-- right tab icons -->
<path d="M1039.8 79.1 L1044.8 64.8 L1049.2 64.8 L1054.1 79.1 L1050.2 79.1 L1049.5 76.5 L1044.5 76.5 L1043.7 79.1 Z M1045.3 73.5 L1048.7 73.5 L1047 68.3 Z" fill="url(#gA2)" fill-rule="evenodd"/>
<g fill="none" stroke-linecap="round">
<path d="M1085.5 65 Q1081.5 66 1082 70 Q1083 73.5 1085.5 75 Q1087 77.5 1082 79.5" stroke="#75507b" stroke-width="2.9"/>
<path d="M1092.5 65 Q1096.5 66 1096 70 Q1095 73.5 1092.5 75 Q1091 77.5 1096 79.5" stroke="#ad7fa8" stroke-width="2.9"/>
<path d="M1089 64.5 L1089 80" stroke="#f57900" stroke-width="1.9" stroke-dasharray="1.5 1.6"/>
</g>
<rect x="1123.3" y="64" width="15.8" height="15.9" fill="#fff"/>
<rect x="1131" y="72" width="8.1" height="7.9" fill="#7f9ff0"/>
<circle cx="1130.5" cy="71.5" r="7.7" fill="#000"/>
<path d="M1134 76.5 L1138 76.5 M1136 74.5 L1136 79" stroke="#000" stroke-width="1"/>
<rect x="1165.5" y="63.5" width="17.5" height="17.5" fill="url(#gBW2)" stroke="#000" stroke-width="1.2"/>
<!-- font ab glyph -->
</svg>
<!-- canvas wilber -->
<svg style="left:0;top:0" width="1230" height="894" viewBox="0 0 1230 894">
<defs><clipPath id="cc"><rect x="7" y="55" width="765" height="807"/></clipPath>
<clipPath id="mc"><rect x="779" y="55" width="226" height="21"/></clipPath></defs>
<g clip-path="url(#cc)">
<path d="M0 560 L563 537 Q585 700 553 862 L0 862 Z" fill="#d8d8d8"/>
<ellipse cx="0" cy="0" rx="314.5" ry="229.6" transform="translate(261.26,519.51) rotate(-14.87)" fill="#ececec"/>
<circle cx="35.4" cy="830" r="70" fill="#ececec"/>
<circle cx="218.75" cy="830" r="103.2" fill="#ececec"/>
<circle cx="58.4" cy="839.4" r="30.6" fill="#d8d8d8"/>
<circle cx="243" cy="845.6" r="49.75" fill="#d8d8d8"/>
</g>
<g clip-path="url(#mc)">
<path d="M790 76 Q791 60 803 55 L818 55 L838.5 72 L840.5 55 L992 55 L988.8 76 Z" fill="#dedede"/>
<path d="M796.6 76 L796.6 70.5 A9.75 9.75 0 0 1 816.1 70.5 L816.1 76 Z" fill="#ebebeb"/>
<circle cx="859.9" cy="68.2" r="17.2" fill="#ebebeb"/>
<circle cx="904.8" cy="68.2" r="25.2" fill="#ebebeb"/>
<circle cx="865.5" cy="67.5" r="7.5" fill="#dedede"/>
<circle cx="910.7" cy="68.6" r="12.2" fill="#dedede"/>
</g>
</svg>
</body></html>
